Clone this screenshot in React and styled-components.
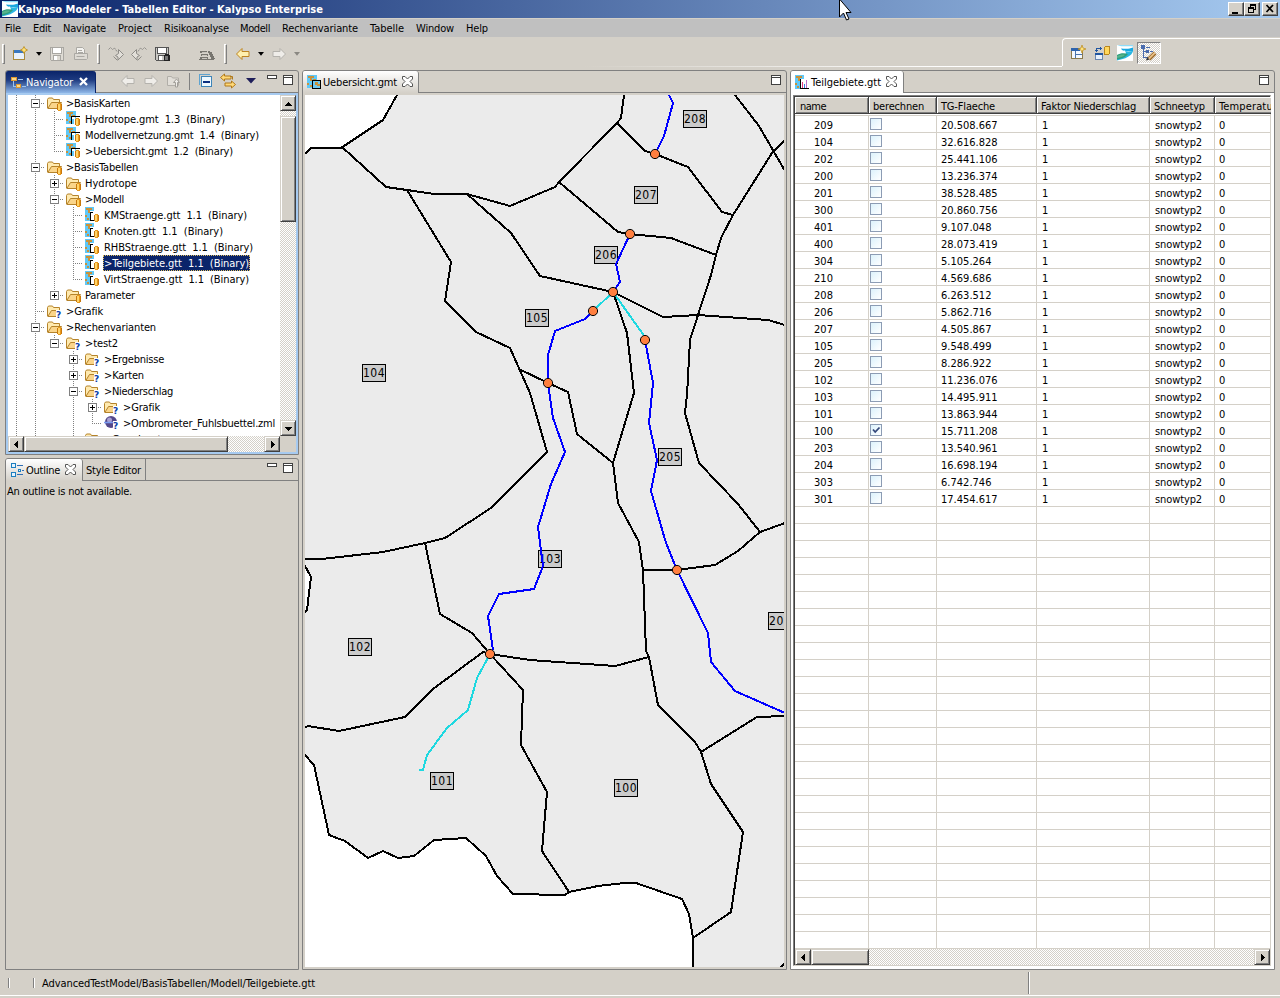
import React, { useLayoutEffect, useRef } from "react";
import styled, { createGlobalStyle, css } from "styled-components";

const C = {
  face: "#d4d0c8",
  shadow: "#808080",
  dark: "#404040",
  navy: "#0a246a",
  sky: "#a6caf0",
};

const GlobalStyle = createGlobalStyle`
  * { box-sizing: border-box; }
  html, body { margin: 0; padding: 0; overflow: hidden; }
  body {
    font-family: "DejaVu Sans Condensed", "DejaVu Sans", Tahoma, sans-serif;
    font-size: 11px;
    line-height: 16px;
    color: #000;
    background: ${C.face};
  }
  svg { display: block; flex: none; }
`;

/* ---------- text ---------- */

const TextSpan = styled.span`
  display: inline-block;
  white-space: pre;
  font-weight: ${(p) => (p.$bold ? 700 : 400)};
`;

// Spreads the letters so that the label takes the given width in pixels.
function Label({ w, bold, children }) {
  const ref = useRef(null);
  useLayoutEffect(() => {
    const el = ref.current;
    el.style.letterSpacing = "0px";
    const natural = el.getBoundingClientRect().width;
    el.style.letterSpacing = (w - natural) / String(children).length + "px";
  }, [w, children]);
  return (
    <TextSpan ref={ref} $bold={bold}>
      {children}
    </TextSpan>
  );
}

/* ---------- window frame ---------- */

const Window = styled.div`
  position: relative;
  display: flex;
  flex-direction: column;
  width: 1280px;
  height: 998px;
  overflow: hidden;
  background: ${C.face};
`;

const TitleBar = styled.div`
  display: flex;
  align-items: center;
  height: 18px;
  flex: none;
  padding: 0 2px 0 2px;
  gap: 0;
  color: #fff;
  background: linear-gradient(90deg, ${C.navy}, ${C.sky});
`;

const TitleText = styled.div`
  padding-top: 1px;
  line-height: 17px;
`;

const WindowButtons = styled.div`
  display: flex;
  margin-left: auto;
`;

const WindowButton = styled.div`
  width: 16px;
  height: 14px;
  margin-left: ${(p) => p.$gap || 0}px;
  background: ${C.face};
  border: 1px solid;
  border-color: #fff ${C.dark} ${C.dark} #fff;
  box-shadow: inset -1px -1px 0 ${C.shadow};
  display: flex;
  justify-content: center;
`;

const MenuBar = styled.div`
  display: flex;
  align-items: center;
  flex: none;
  height: 19px;
  padding: 1px 0 0 5px;
  border-top: 1px solid ${C.face};
  background: #c0c0c0;
`;

const MenuItem = styled.div`
  width: ${(p) => p.$w}px;
  flex: none;
`;

const ToolBar = styled.div`
  display: flex;
  height: 30px;
  flex: none;
`;

const ToolStrip = styled.div`
  display: flex;
  align-items: center;
  width: 1062px;
  padding-top: 4px;
  border-bottom: 1px solid;
  border-image: linear-gradient(90deg, ${C.face} 55%, #fff 90%) 1;
`;

const PerspectiveStrip = styled.div`
  display: flex;
  align-items: center;
  flex: 1;
  height: 28px;
  margin-top: 1px;
  padding-left: 3px;
  border: 1px solid #fff;
  border-width: 1px 0 0 1px;
  border-radius: 4px 0 0 0;
`;

const Slot = styled.div`
  width: ${(p) => p.$w}px;
  margin-left: ${(p) => p.$gap || 0}px;
  flex: none;
  display: flex;
  justify-content: center;
  align-items: center;
`;

const Handle = styled.div`
  width: 3px;
  height: 20px;
  margin: 0 ${(p) => p.$after}px 0 ${(p) => p.$before}px;
  border: 1px solid;
  border-color: #fff ${C.shadow} ${C.shadow} #fff;
  flex: none;
`;

const Pressed = styled.div`
  width: 24px;
  height: 22px;
  display: flex;
  align-items: center;
  justify-content: center;
  border: 1px solid;
  border-color: ${C.shadow} #fff #fff ${C.shadow};
  background: repeating-conic-gradient(#fff 0 25%, ${C.face} 0 50%) 0 0 / 2px 2px;
`;

/* ---------- panels ---------- */

const Workbench = styled.div`
  display: flex;
  flex: 1;
  min-height: 0;
  padding: 3px 4px 0 5px;
  gap: 3px;
`;

const LeftColumn = styled.div`
  display: flex;
  flex-direction: column;
  width: 294px;
  gap: 3px;
`;

const Panel = styled.section`
  display: flex;
  flex-direction: column;
  width: ${(p) => (p.$w ? p.$w + "px" : "auto")};
  height: ${(p) => (p.$h ? p.$h + "px" : "auto")};
  border: 1px solid ${C.shadow};
  border-radius: 3px 3px 0 0;
  background: ${C.face};
  overflow: hidden;
  flex: none;
`;

const TabStrip = styled.header`
  display: flex;
  height: 22px;
  flex: none;
  box-shadow: inset 0 -1px 0 ${C.shadow};
`;

const Tab = styled.div`
  display: flex;
  align-items: center;
  height: 100%;
  width: ${(p) => p.$w}px;
  padding: 1px 0 0 ${(p) => p.$pad ?? 4}px;
  flex: none;
  ${(p) =>
    p.$kind !== "plain" &&
    css`
      border-right: 1px solid ${C.shadow};
      background: linear-gradient(#fff, ${p.$kind === "white" ? "#fff" : C.face});
      border-radius: 0 3px 0 0;
    `}
  ${(p) =>
    p.$kind === "active" &&
    css`
      color: #fff;
      border-right-color: ${C.navy};
      background: linear-gradient(${C.navy}, #1d3a80 40%, #8fb7e8);
    `}
  ${(p) => p.$kind === "plain" && css`border-right: 1px solid ${C.shadow};`}
`;

const TabClose = styled.div`
  margin-left: 5px;
  padding-bottom: 3px;
`;

const PanelTools = styled.div`
  display: flex;
  margin-left: auto;
  padding: 0 ${(p) => p.$right || 5}px 2px 0;
`;

const MinMax = styled.div`
  display: flex;
  gap: 6px;
  padding-top: 4px;
`;

const MinGlyph = styled.div`
  width: 10px;
  height: 4px;
  border: 1px solid ${C.dark};
  background: #fff;
`;

const MaxGlyph = styled.div`
  width: 10px;
  height: 10px;
  border: 1px solid ${C.dark};
  box-shadow: inset 0 1px 0 #fff, inset 0 2px 0 ${C.dark};
  background: #fff;
`;

const Divider = styled.div`
  width: 1px;
  height: 17px;
  margin: 2px 4px 0 3px;
  background: ${C.shadow};
`;

/* ---------- scroll bars ---------- */

const ScrollButton = styled.div`
  width: 16px;
  height: 16px;
  flex: none;
  display: flex;
  align-items: center;
  justify-content: center;
  background: ${C.face};
  border: 1px solid;
  border-color: ${C.face} ${C.dark} ${C.dark} ${C.face};
  box-shadow: inset 1px 1px 0 #fff, inset -1px -1px 0 ${C.shadow};
`;

const ScrollTrack = styled.div`
  display: flex;
  flex-direction: ${(p) => (p.$vertical ? "column" : "row")};
  width: ${(p) => (p.$vertical ? "16px" : "auto")};
  height: ${(p) => (p.$vertical ? "auto" : "16px")};
  flex: ${(p) => (p.$fill ? 1 : "none")};
  background: repeating-conic-gradient(#fff 0 25%, ${C.face} 0 50%) 0 0 / 2px 2px;
`;

const ScrollThumb = styled(ScrollButton)`
  width: ${(p) => p.$w || 16}px;
  height: ${(p) => p.$h || 16}px;
  margin: ${(p) => p.$offset || 0}px 0 0 0;
`;

const Spacer = styled.div`
  flex: 1;
`;

const Arrow = ({ dir }) => {
  const d = {
    up: "M4 3h1v1h1v1h1v1h1v1h-7v-1h1v-1h1v-1h1z",
    down: "M1 3h7v1h-1v1h-1v1h-1v1h-1v-1h-1v-1h-1v-1h-1z",
    left: "M6 1v7h-1v-1h-1v-1h-1v-1h-1v-1h1v-1h1v-1h1v-1z",
    right: "M3 1v7h1v-1h1v-1h1v-1h1v-1h-1v-1h-1v-1h-1v-1z",
  }[dir];
  return (
    <svg width="9" height="9" shapeRendering="crispEdges">
      <path d={d} />
    </svg>
  );
};

/* ---------- icons ---------- */

const Wave = ({ w = 16, h = 16 }) => (
  <svg width={w} height={h} viewBox="0 0 16 16" preserveAspectRatio="none">
    <rect width="16" height="16" fill="#fff" />
    <path d="M0 0h16v1.500c-4-1-9 .5-13-.5z" fill="#8fdcf8" />
    <path d="M4 3.500c4 0 7 1 12-1v4c-4-1-8 .5-11-1.500z" fill="#19a7e0" />
    <path d="M8 6c3 1 5 0 8 0-1 5-8 8-16 9.500v-2c6-1 11-4 8-7.500z" fill="#2ab6e2" />
    <path d="M0 10c3-2 8-2 11-1-2 3-7 5-11 5.500z" fill="#2f9d7c" />
    <path d="M0 11c3-1 5-2 8-1-2 2-5 2.500-8 3z" fill="#58b48c" />
  </svg>
);

const Cylinder = ({ x, y }) => (
  <g transform={`translate(${x} ${y})`}>
    <rect x="0" y="1" width="5" height="6" fill="#c8780c" />
    <rect x="1" y="0" width="3" height="8" fill="#e8981c" />
    <rect x="1" y="1" width="2" height="6" fill="#ffd468" />
  </g>
);

const Question = ({ x, y }) => (
  <g>
    <rect x={x - 1} y={y - 8} width="6" height="9" fill="#fff" />
    <text x={x - 1} y={y} fontSize="9" fontWeight="700" fill="#0a3fa8" fontFamily="DejaVu Sans">
      ?
    </text>
  </g>
);

const FolderIcon = ({ mark }) => (
  <svg width="17" height="16" viewBox="0 0 17 16">
    <path d="M.5 13V4.500l1-1.500h4l1 1.500h6v3.500" fill="#ffeab0" stroke="#b5832a" />
    <path d="M.8 13.500l3.700-6h10l-3 6z" fill="#fad58a" stroke="#b5832a" />
    {mark === "db" ? <Cylinder x={10} y={8} /> : <Question x={10} y={15} />}
  </svg>
);

const MapIcon = ({ mark }) => (
  <svg width="16" height="16" shapeRendering="crispEdges">
    <rect width="10" height="13" fill="#5fc8f8" />
    <path d="M1 1h6v2h-2v3h-2v-3h-2zM0 8h2v2h-2zM6 4h3v2h-3zM3 10h2v2h-2z" fill="#c9923a" />
    {mark === "frame" ? (
      <g>
        <rect x="5.500" y="5.500" width="8" height="8" fill="#6fc8f0" stroke="#000" />
        <path d="M8 7h3v2h2v2h-3v-1h-2z" fill="#c9923a" />
      </g>
    ) : (
      <g>
        <path d="M5.500 13V5.500H14" fill="none" stroke="#000" />
        <rect x="6" y="6" width="3" height="7" fill="#fff" />
        <rect x="6" y="8" width="2" height="5" fill="#5fc8f8" />
        <Cylinder x={9} y={7} />
      </g>
    )}
  </svg>
);

const TableIcon = ({ chart }) => (
  <svg width="16" height="16" shapeRendering="crispEdges">
    <rect width="9" height="14" fill="#5fc8f8" />
    <path d="M1 1h6v2h-2v3h-2v-3h-2zM0 8h2v2h-2zM2 11h2v2h-2z" fill="#c9923a" />
    <rect x="5" y="4" width="10" height="10" fill="#fff" />
    <path d={chart ? "M5.500 4v9.500H14" : "M8 5.500H5.500v8H9"} fill="none" stroke="#000" />
    {chart ? (
      <g>
        <rect x="7" y="7" width="1" height="6" fill="#e33b7c" />
        <rect x="9" y="9" width="1" height="4" fill="#3a7fe0" />
        <rect x="11" y="5" width="1" height="8" fill="#b86fc8" />
      </g>
    ) : (
      <Cylinder x={9} y={7} />
    )}
  </svg>
);

const BallIcon = () => (
  <svg width="17" height="16">
    <circle cx="7" cy="7" r="6" fill="#54488a" />
    <circle cx="5.500" cy="5" r="2.500" fill="#a9a0d0" />
    <path d="M0 7.500h14" stroke="#7a9cf0" strokeWidth="1.500" />
    <Question x={10} y={14} />
  </svg>
);

const NewIcon = () => (
  <svg width="16" height="16">
    <rect x="1.500" y="4.500" width="11" height="9" fill="#e8f1fc" stroke="#a98a3c" />
    <rect x="2" y="4" width="10" height="3" fill="#3a78c0" />
    <path d="M12 .5l1.200 2.300 2.300 1.200-2.300 1.200L12 7.500l-1.200-2.300L8.500 4l2.300-1.200z" fill="#ffe27a" stroke="#b98a1c" strokeWidth=".8" />
  </svg>
);

const SaveIcon = ({ dark }) => {
  const s = dark ? "#555" : "#a9a7a2";
  return (
    <svg width="16" height="16" shapeRendering="crispEdges">
      <path d="M1.500 1.500h13v13h-12l-1-1z" fill={dark ? "#c9c8c4" : "#dedbd4"} stroke={s} />
      <rect x="4" y="2" width="8" height="5" fill="#fff" />
      <path d="M3.500 2v5.500h9V2M4.500 14v-4.500h7V14" fill="none" stroke={s} />
      <rect x="5" y="10" width="3" height="4" fill="#fff" />
      {dark && <path d="M10 9h1v-1h4v1h1v6h-6z" fill="#222" />}
      {dark && <rect x="11" y="10" width="3" height="4" fill="#777" />}
    </svg>
  );
};

const PrintIcon = () => (
  <svg width="16" height="16">
    <path d="M3.500 7.500v-6h6l2 2v4" fill="#f4f3f0" stroke="#aaa8a3" />
    <path d="M1.500 7.500h13v5l-1 1h-12z" fill="#dddad4" stroke="#aaa8a3" />
    <path d="M3.500 10.500h8M5 4.500h4M5 6.500h5" stroke="#aaa8a3" />
  </svg>
);

const SkipIcon = ({ flip }) => (
  <svg width="16" height="16">
    <g transform={flip ? "translate(16 0) scale(-1 1)" : undefined} fill="none" stroke="#8e8c88">
      <path d="M.5 3.500l2-2 2 2 2-1.500 2.500 3.500" strokeDasharray="2 .6" />
      <path d="M10.500 3.500l5 5-5.500 5.500v-3l-2.500-1.500 3-2z" fill="#e2dfd9" />
      <path d="M5.500 10.500l4 4" />
    </g>
  </svg>
);

const BooksIcon = () => (
  <svg width="16" height="16" shapeRendering="crispEdges">
    <path d="M1 5h7v2h-7zM2 8h7v2h-7zM1 11h8v2h-8z" fill="#77756f" />
    <path d="M9.500 5l4 8M12 6l3 7" stroke="#77756f" strokeWidth="1.500" />
    <path d="M3 6h5M3 9h5M3 12h5" stroke="#c8c5be" />
    <path d="M0 13.500h15" stroke="#77756f" />
  </svg>
);

const BigArrow = ({ right, off }) => (
  <svg width="16" height="16">
    <path
      transform={right ? "translate(16 0) scale(-1 1)" : undefined}
      d="M1.500 8l5.500-5.500v3h7v5H7v3z"
      fill={off ? "#efede9" : "#fff0ae"}
      stroke={off ? "#b4b2ad" : "#bd8420"}
      strokeLinejoin="round"
    />
  </svg>
);

const DropArrow = ({ off, big }) => (
  <svg width={big ? 10 : 6} height={big ? 6 : 4} viewBox="0 0 10 6" preserveAspectRatio="none">
    <path d="M0 0h10L5 5.500z" fill={big ? "#1e1e5a" : off ? "#8a8882" : "#000"} />
  </svg>
);

const UpFolderIcon = () => (
  <svg width="16" height="16">
    <path d="M1.500 12.500v-9h4l1 1.500h6v7.500z" fill="#e2dfd9" stroke="#b1aea8" />
    <path d="M9.500 14V9.500h-2l3-3.500 3 3.500h-2V14z" fill="#efede9" stroke="#a19e98" />
  </svg>
);

const CollapseIcon = () => (
  <svg width="16" height="16" shapeRendering="crispEdges">
    <path d="M1.500 12V1.500h10" fill="none" stroke="#5ea3d0" />
    <rect x="3.500" y="3.500" width="10" height="10" fill="#eef8ff" stroke="#3d84b8" />
    <rect x="5" y="8" width="7" height="2" fill="#0c2f80" />
  </svg>
);

const LinkIcon = () => (
  <svg width="16" height="16" stroke="#b0791a" fill="#ffd978" strokeLinejoin="round">
    <path d="M.5 4.500l4-3.500v2h6.500v3H4.500v2z" />
    <path d="M15.500 11.500l-4 3.500v-2H5v-3h6.500V8z" />
    <path d="M10 3.500h2.500v3" fill="none" />
  </svg>
);

const NavIcon = () => (
  <svg width="16" height="16" shapeRendering="crispEdges">
    <path d="M3.500 5v6.500h3" fill="none" stroke="#9cc4f0" />
    <rect x="1.500" y="2.500" width="5" height="3" fill="#fbd98c" stroke="#e09a30" />
    <rect x="6.500" y="9.500" width="4" height="3" fill="#fbd98c" stroke="#e09a30" />
    <path d="M8 4.500h5M12 11.500h4" stroke="#9cc4f0" />
  </svg>
);

const OutlineIcon = () => (
  <svg width="16" height="16" shapeRendering="crispEdges" fill="#e6f4ff" stroke="#1c7fc0">
    <rect x="1.500" y=".5" width="4" height="4" />
    <rect x="1.500" y="9.500" width="4" height="4" />
    <rect x="8.500" y="6.500" width="2" height="2" />
    <path d="M7 2.500h6M12 7.500h2M7 11.500h6" stroke="#2f6db4" />
  </svg>
);

const CloseIcon = ({ white }) =>
  white ? (
    <svg width="11" height="11">
      <path d="M2 2l7 7M9 2l-7 7" stroke="#fff" strokeWidth="2.300" />
    </svg>
  ) : (
    <svg width="11" height="11">
      <path
        d="M.5.500h2.500l2.500 2.500L8 .5h2.500v2.500L8 5.500l2.500 2.500v2.500H8L5.500 8 3 10.500H.5V8L3 5.500.5 3z"
        fill="#fff"
        stroke="#555"
      />
    </svg>
  );

const OpenPerspectiveIcon = () => (
  <svg width="16" height="16" shapeRendering="crispEdges">
    <rect x="1.500" y="3.500" width="11" height="10" fill="#f4f8fe" stroke="#8a7a4c" />
    <rect x="1" y="3" width="9" height="3" fill="#2f64ac" />
    <path d="M5.500 6v7M5 9.500h7" stroke="#4a74ac" />
    <path d="M12 0l1 3 3 1-3 1-1 3-1-3-3-1 3-1z" fill="#ffe27a" stroke="#b98a1c" strokeWidth=".7" shapeRendering="auto" />
  </svg>
);

const SyncIcon = () => (
  <svg width="16" height="16" shapeRendering="crispEdges">
    <rect x="1.500" y="8.500" width="7" height="6" fill="#e8f1fc" stroke="#6a86b0" />
    <rect x="1" y="8" width="8" height="2" fill="#1f55a0" />
    <path d="M2.500 7V3.500H8M1 5.500h3M6.500 2v3" fill="none" stroke="#1f55a0" />
    <rect x="10.500" y="1.500" width="5" height="8" rx="1.500" fill="#ffd75c" stroke="#b9861c" />
  </svg>
);

const TreeEditIcon = () => (
  <svg width="18" height="17">
    <g shapeRendering="crispEdges">
      <path d="M3.500 3v10.500M3 7.500h5M3 13.500h5" stroke="#4a6cae" fill="none" />
      <rect x="1" y="1" width="4" height="4" fill="#4a6cae" />
      <rect x="6" y="6" width="3" height="3" fill="#4a6cae" />
      <path d="M6 3.500h4M10 7.500h3" stroke="#4a6cae" />
    </g>
    <path d="M9 15l6-6" stroke="#9a6a2c" strokeWidth="4" />
    <path d="M9 14.600l6-6" stroke="#e8c088" strokeWidth="2" />
    <path d="M6 16.500l1-3.500 2.500 2.500z" fill="#333" />
  </svg>
);

/* ---------- navigator tree ---------- */

const FocusFrame = styled.div`
  display: flex;
  flex-direction: column;
  flex: 1;
  min-height: 0;
  padding: 0 2px 0;
  border-top: 2px solid ${C.sky};
  border-bottom: 2px solid ${C.sky};
  background: ${C.sky};
`;

const TreeBody = styled.div`
  display: flex;
  height: 341px;
  flex: none;
`;

const Tree = styled.div`
  flex: 1;
  min-width: 0;
  overflow: hidden;
  background: #fff;
`;

const TreeRow = styled.div`
  display: flex;
  height: 16px;
  white-space: nowrap;
`;

const dotsV = "repeating-linear-gradient(180deg, #808080 0 1px, transparent 1px 2px)";
const dotsH = "repeating-linear-gradient(90deg, #808080 0 1px, transparent 1px 2px)";

const Guide = styled.div`
  display: flex;
  align-items: center;
  justify-content: flex-end;
  width: 19px;
  height: 16px;
  flex: none;
  padding-right: 5px;
  background-repeat: no-repeat;
  &:first-child { width: 18px; }
  ${(p) => p.$type === "v" && css`background-image: ${dotsV}; background-size: 1px 16px; background-position: right 9px top 0;`}
  ${(p) =>
    "t+-".includes(p.$type) &&
    css`
      background-image: ${dotsV}, ${dotsH};
      background-size: 1px 16px, 10px 1px;
      background-position: right 9px top 0, right 0 top 8px;
    `}
  ${(p) =>
    "lpm".includes(p.$type) &&
    css`
      background-image: ${dotsV}, ${dotsH};
      background-size: 1px 8px, 10px 1px;
      background-position: right 9px top 0, right 0 top 8px;
    `}
`;

const ExpandBox = styled.div`
  width: 9px;
  height: 9px;
  margin-top: 1px;
  border: 1px solid ${C.shadow};
  background: linear-gradient(#000, #000) 1px 3px / 5px 1px no-repeat,
    ${(p) => (p.$plus ? "linear-gradient(#000, #000) 3px 1px / 1px 5px no-repeat," : "")} #fff;
`;

const TreeIcon = styled.div`
  margin: 0 1px 0 2px;
  width: 17px;
  flex: none;
`;

const TreeText = styled.div`
  height: 16px;
  padding: 1px 1px 0 1px;
  ${(p) =>
    p.$selected &&
    css`
      color: #fff;
      background: ${C.navy};
      outline: 1px dotted #e0c060;
      outline-offset: -1px;
    `}
`;

const treeRows = [
  ["v-", "db", ">BasisKarten", 64],
  ["vvt", "map", "Hydrotope.gmt  1.3  (Binary)", 140],
  ["vvt", "map", "Modellvernetzung.gmt  1.4  (Binary)", 174],
  ["vvl", "map", ">Uebersicht.gmt  1.2  (Binary)", 148],
  ["v-", "db", ">BasisTabellen", 72],
  ["vv+", "db", "Hydrotope", 52],
  ["vv-", "db", ">Modell", 39],
  ["vvvt", "table", "KMStraenge.gtt  1.1  (Binary)", 143],
  ["vvvt", "table", "Knoten.gtt  1.1  (Binary)", 119],
  ["vvvt", "table", "RHBStraenge.gtt  1.1  (Binary)", 149],
  ["vvvt", "table", ">Teilgebiete.gtt  1.1  (Binary)", 145, true],
  ["vvvl", "table", "VirtStraenge.gtt  1.1  (Binary)", 145],
  ["vvp", "db", "Parameter", 50],
  ["vt", "q", ">Grafik", 37],
  ["v-", "db", ">Rechenvarianten", 90],
  ["vvm", "q", ">test2", 33],
  ["vv +", "q", ">Ergebnisse", 60],
  ["vv +", "q", ">Karten", 40],
  ["vv -", "q", ">Niederschlag", 69],
  ["vv v+", "q", ">Grafik", 37],
  ["vv vl", "ball", ">Ombrometer_Fuhlsbuettel.zml", 152],
  ["vv t", "q", ">Grundwert", 57],
];

const rowIcon = {
  db: <FolderIcon mark="db" />,
  q: <FolderIcon mark="q" />,
  map: <MapIcon />,
  table: <TableIcon />,
  ball: <BallIcon />,
};

function NavigatorTree() {
  return (
    <Tree>
      {treeRows.map(([guides, icon, text, w, selected], i) => (
        <TreeRow key={i}>
          {guides.split("").map((g, k) => (
            <Guide key={k} $type={g}>
              {"+-pm".includes(g) && <ExpandBox $plus={g === "+" || g === "p"} />}
            </Guide>
          ))}
          <TreeIcon>{rowIcon[icon]}</TreeIcon>
          <TreeText $selected={selected}>
            <Label w={w}>{text}</Label>
          </TreeText>
        </TreeRow>
      ))}
    </Tree>
  );
}

const Corner = styled.div`
  width: 16px;
  background: ${C.face};
`;

const BottomScroll = styled.div`
  display: flex;
  height: 16px;
  flex: none;
`;

const OutlineBody = styled.div`
  padding: 3px 0 0 1px;
`;

/* ---------- map ---------- */

const MapArea = styled.div`
  width: 479px;
  height: 872px;
  margin: 2px 0 0 2px;
  overflow: hidden;
  background: #ebebeb;
`;

const boundaries = [
  "305,154 311,148 341,148 383,120 397,95",
  "342,147 386,187 407,190 434,194 467,194 510,206 555,187 559,182 617,123 621,118 624,95",
  "617,123 645,151 655,154 688,167 722,212 733,215",
  "559,182 618,232 630,234 671,238 716,255",
  "735,95 759,126 785,171",
  "785,140 772,153 733,215 721,238 716,255 711,275 698,315 690,340 687,395 685,413 699,463 738,504 760,532 785,523",
  "760,532 738,551 715,565 677,570 643,570",
  "467,194 511,233 540,276 613,292 663,317 698,315 768,320 785,325",
  "407,190 451,262 445,301 476,332 510,348 530,393 547,452 491,508 445,538 425,543 383,552 322,559 305,559",
  "519,369 548,383 568,392 577,434 613,463 618,503 639,542 643,570 646,651 649,657 658,705 695,742 701,752 711,784 743,832 731,912 693,938",
  "613,292 627,333 634,393 613,463",
  "425,543 440,614 472,633 490,654 523,690 521,745 547,792 542,851 569,892",
  "490,654 483,652 433,689 405,717 339,731 308,726 304,728",
  "490,654 530,660 615,666 649,657",
  "304,564 311,577 307,610 304,613",
  "304,754 314,765 329,835 345,841 368,858 383,851 398,858 414,856 434,840 466,838 486,856 497,876 513,894 565,895 569,892 598,886 625,883 636,883 682,899 689,914 693,938 693,968",
  "701,752 757,717 785,716",
  "780,968 785,963",
];

const rivers = [
  "669,95 673,103 664,136 655,154",
  "630,234 616,264 620,282 613,292",
  "593,311 585,319 555,331 548,355 548,383 553,418 565,452 551,484 538,527 543,566 534,589 499,594 488,616 493,650",
  "645,340 653,383 649,423 657,460 651,491 666,543 677,570 708,633 711,662 735,691 785,713",
];

const drains = [
  "613,292 593,311",
  "613,292 645,337",
  "490,654 477,678 468,710 447,728 427,755 423,770 419,770",
];

const nodes = [
  [655, 154], [630, 234], [613, 292], [593, 311], [645, 340], [548, 383], [677, 570], [490, 654],
];

const regions = [
  [683, 110, "208"], [634, 186, "207"], [594, 246, "206"], [525, 309, "105"], [362, 364, "104"],
  [538, 550, "103"], [348, 638, "102"], [430, 772, "101"], [614, 779, "100"], [658, 448, "205"],
  [768, 612, "20"],
];

const Lines = ({ list, color }) =>
  list.map((points) => (
    <polyline key={points} points={points} fill="none" stroke={color} strokeWidth="2" shapeRendering="crispEdges" />
  ));

const CatchmentMap = () => (
  <svg width="479" height="872" viewBox="305 95 479 872">
    <g fill="#fff">
      <polygon points="305,95 397,95 383,120 341,148 311,148 305,154" />
      <polygon points="305,565 311,577 307,610 305,613" />
      <polygon points="305,755 314,765 329,835 345,841 368,858 383,851 398,858 414,856 434,840 466,838 486,856 497,876 513,894 565,895 598,886 625,883 636,883 682,899 689,914 693,938 693,967 305,967" />
    </g>
    <Lines list={boundaries} color="#000" />
    {regions.map(([x, y, name]) => (
      <g key={name}>
        <rect x={x + 0.5} y={y + 0.5} width="23" height="17" fill="#cbcbcb" stroke="#000" />
        <text x={x + 1} y={y + 13} fontSize="12" textLength={name.length * 7.2} fill="#000">
          {name}
        </text>
      </g>
    ))}
    <Lines list={rivers} color="#0000ff" />
    <Lines list={drains} color="#1ed8e0" />
    {nodes.map(([x, y]) => (
      <circle key={x} cx={x} cy={y} r="4.600" fill="#ff7f3f" stroke="#000" />
    ))}
  </svg>
);

/* ---------- table ---------- */

const TableFrame = styled.div`
  display: flex;
  flex-direction: column;
  flex: 1;
  padding: 2px 3px 3px 2px;
  background: #fff;
`;

const Table = styled.div`
  flex: 1;
  border: 1px solid;
  border-color: ${C.shadow} ${C.face} ${C.face} ${C.shadow};
  box-shadow: inset 1px 1px 0 ${C.dark};
  padding: 1px 0 0 1px;
`;

const columns = "74px 68px 100px 113px 65px 56px";

const HeadRow = styled.div`
  display: grid;
  grid-template-columns: ${columns};
  height: 17px;
`;

const HeadCell = styled.div`
  padding: 1px 0 0 4px;
  line-height: 17px;
  overflow: hidden;
  background: ${C.face};
  box-shadow: inset -1px -1px 0 ${C.dark}, inset 1px 1px 0 #fff, inset -2px -2px 0 ${C.shadow};
  &:first-child { padding-left: 5px; }
  &:last-child {
    box-shadow: inset 0 -1px 0 ${C.dark}, inset 1px 1px 0 #fff, inset 0 -2px 0 ${C.shadow};
  }
`;

const HeadGap = styled.div`
  height: 2px;
  border-bottom: 1px solid ${C.face};
`;

const Row = styled.div`
  display: grid;
  grid-template-columns: ${columns};
  height: 17px;
`;

const Cell = styled.div`
  padding: 1px 0 0 ${(p) => p.$pad}px;
  border: 1px solid ${C.face};
  border-width: 0 1px 1px 0;
  line-height: 17px;
  height: 17px;
`;

const CheckBox = styled.div`
  display: flex;
  width: 12px;
  height: 12px;
  margin-top: 1px;
  border: 1px solid #8c9cb4;
  background: linear-gradient(135deg, #dcf2fc, #fff);
`;

const heads = [
  ["name", 26], ["berechnen", 51], ["TG-Flaeche", 54], ["Faktor Niederschlag", 95], ["Schneetyp", 51], ["Temperatur", 58],
];

const data = [
  ["209", "20.508.667"], ["104", "32.616.828"], ["202", "25.441.106"], ["200", "13.236.374"],
  ["201", "38.528.485"], ["300", "20.860.756"], ["401", "9.107.048"], ["400", "28.073.419"],
  ["304", "5.105.264"], ["210", "4.569.686"], ["208", "6.263.512"], ["206", "5.862.716"],
  ["207", "4.505.867"], ["105", "9.548.499"], ["205", "8.286.922"], ["102", "11.236.076"],
  ["103", "14.495.911"], ["101", "13.863.944"], ["100", "15.711.208", true], ["203", "13.540.961"],
  ["204", "16.698.194"], ["303", "6.742.746"], ["301", "17.454.617"],
];

const numberWidth = (s) => s.split("").reduce((sum, c) => sum + (c === "." ? 4 : 6), 0);

function DataTable() {
  const rows = Array.from({ length: 49 }, (_, i) => data[i]);
  return (
    <Table>
      <HeadRow>
        {heads.map(([text, w]) => (
          <HeadCell key={text}>
            <Label w={w}>{text}</Label>
          </HeadCell>
        ))}
      </HeadRow>
      <HeadGap />
      {rows.map((r, i) => (
        <Row key={i}>
          <Cell $pad={19}>{r && <Label w={19}>{r[0]}</Label>}</Cell>
          <Cell $pad={1}>
            {r && (
              <CheckBox>
                {r[2] && (
                  <svg width="10" height="10">
                    <path d="M2 4.500l2.200 2.500L8.500 2.500" fill="none" stroke="#34487a" strokeWidth="1.800" />
                  </svg>
                )}
              </CheckBox>
            )}
          </Cell>
          <Cell $pad={4}>{r && <Label w={numberWidth(r[1]) + 0.5}>{r[1]}</Label>}</Cell>
          <Cell $pad={5}>{r && "1"}</Cell>
          <Cell $pad={5}>{r && <Label w={47}>snowtyp2</Label>}</Cell>
          <Cell $pad={4}>{r && "0"}</Cell>
        </Row>
      ))}
      <ScrollTrack>
        <ScrollButton>
          <Arrow dir="left" />
        </ScrollButton>
        <ScrollThumb $w={58} />
        <Spacer />
        <ScrollButton>
          <Arrow dir="right" />
        </ScrollButton>
      </ScrollTrack>
    </Table>
  );
}

/* ---------- status bar ---------- */

const StatusBar = styled.footer`
  display: flex;
  align-items: center;
  height: 28px;
  flex: none;
  padding: 0 0 2px 8px;
  box-shadow: inset 0 -2px 0 ${C.face}, inset 0 -3px 0 #fff;
`;

const StatusRule = styled.div`
  width: 2px;
  height: ${(p) => p.$h}px;
  margin-right: ${(p) => p.$after || 0}px;
  border: solid;
  border-width: 0 1px;
  border-color: ${C.shadow} #fff transparent ${C.shadow};
`;

const StatusText = styled.div`
  width: 986px;
  padding-top: 1px;
`;

const Pointer = styled.svg`
  position: absolute;
  left: 839px;
  top: 0;
`;

const menus = [
  ["File", 16, 28], ["Edit", 18, 30], ["Navigate", 43, 55], ["Project", 34, 46], ["Risikoanalyse", 65, 76],
  ["Modell", 30, 42], ["Rechenvariante", 76, 88], ["Tabelle", 34, 46], ["Window", 38, 50], ["Help", 22, 30],
];

export default function App() {
  return (
    <>
      <GlobalStyle />
      <Window>
        <TitleBar>
          <Wave />
          <TitleText>
            <Label w={305} bold>
              Kalypso Modeler - Tabellen Editor - Kalypso Enterprise
            </Label>
          </TitleText>
          <WindowButtons>
            <WindowButton>
              <svg width="14" height="12" shapeRendering="crispEdges">
                <rect x="3" y="9" width="6" height="2" />
              </svg>
            </WindowButton>
            <WindowButton>
              <svg width="14" height="12" shapeRendering="crispEdges">
                <path d="M5.500 5V2.500h5v4H9M5 2h6M3.500 5.500h5v4h-5zM3 5h6" fill="none" stroke="#000" />
                <path d="M5 1h6v2H5zM3 4h6v2H3z" />
              </svg>
            </WindowButton>
            <WindowButton $gap={2}>
              <svg width="14" height="12">
                <path d="M3.500 2l6.500 7M10 2L3.500 9" stroke="#000" strokeWidth="1.700" />
              </svg>
            </WindowButton>
          </WindowButtons>
        </TitleBar>
        <MenuBar>
          {menus.map(([text, w, slot]) => (
            <MenuItem key={text} $w={slot}>
              <Label w={w}>{text}</Label>
            </MenuItem>
          ))}
        </MenuBar>
        <ToolBar>
          <ToolStrip>
            <Handle $before={2} $after={3} />
            <Slot $w={24}><NewIcon /></Slot>
            <Slot $w={13}><DropArrow /></Slot>
            <Slot $w={24}><SaveIcon /></Slot>
            <Slot $w={23}><PrintIcon /></Slot>
            <Handle $before={5} $after={4} />
            <Slot $w={23}><SkipIcon /></Slot>
            <Slot $w={23}><SkipIcon flip /></Slot>
            <Slot $w={23}><SaveIcon dark /></Slot>
            <Slot $w={23} $gap={22}><BooksIcon /></Slot>
            <Handle $before={6} $after={5} />
            <Slot $w={22}><BigArrow /></Slot>
            <Slot $w={14}><DropArrow /></Slot>
            <Slot $w={22}><BigArrow right off /></Slot>
            <Slot $w={14}><DropArrow off /></Slot>
          </ToolStrip>
          <PerspectiveStrip>
            <Slot $w={24}><OpenPerspectiveIcon /></Slot>
            <Slot $w={23}><SyncIcon /></Slot>
            <Slot $w={24}><Wave /></Slot>
            <Pressed><TreeEditIcon /></Pressed>
          </PerspectiveStrip>
        </ToolBar>

        <Workbench>
          <LeftColumn>
            <Panel $h={385}>
              <TabStrip>
                <Tab $w={90} $kind="active">
                  <NavIcon />
                  <Label w={47}>Navigator</Label>
                  <TabClose><CloseIcon white /></TabClose>
                </Tab>
                <PanelTools>
                  <Slot $w={23}><BigArrow off /></Slot>
                  <Slot $w={23}><BigArrow right off /></Slot>
                  <Slot $w={24}><UpFolderIcon /></Slot>
                  <Divider />
                  <Slot $w={23}><CollapseIcon /></Slot>
                  <Slot $w={22}><LinkIcon /></Slot>
                  <Slot $w={23}><DropArrow big /></Slot>
                  <Slot $w={5} />
                  <MinMax>
                    <MinGlyph />
                    <MaxGlyph />
                  </MinMax>
                </PanelTools>
              </TabStrip>
              <FocusFrame>
                <TreeBody>
                  <NavigatorTree />
                  <ScrollTrack $vertical>
                    <ScrollButton><Arrow dir="up" /></ScrollButton>
                    <ScrollThumb $h={106} $offset={5} />
                    <Spacer />
                    <ScrollButton><Arrow dir="down" /></ScrollButton>
                  </ScrollTrack>
                </TreeBody>
                <BottomScroll>
                  <ScrollTrack $fill>
                    <ScrollButton><Arrow dir="left" /></ScrollButton>
                    <ScrollThumb $w={204} />
                    <Spacer />
                    <ScrollButton><Arrow dir="right" /></ScrollButton>
                  </ScrollTrack>
                  <Corner />
                </BottomScroll>
              </FocusFrame>
            </Panel>

            <Panel $h={512}>
              <TabStrip>
                <Tab $w={77}>
                  <OutlineIcon />
                  <Label w={34}>Outline</Label>
                  <TabClose><CloseIcon /></TabClose>
                </Tab>
                <Tab $w={63} $pad={3} $kind="plain">
                  <Label w={55}>Style Editor</Label>
                </Tab>
                <PanelTools>
                  <MinMax>
                    <MinGlyph />
                    <MaxGlyph />
                  </MinMax>
                </PanelTools>
              </TabStrip>
              <OutlineBody>
                <Label w={125}>An outline is not available.</Label>
              </OutlineBody>
            </Panel>
          </LeftColumn>

          <Panel $w={485} $h={900}>
            <TabStrip>
              <Tab $w={116}>
                <MapIcon mark="frame" />
                <Label w={74}>Uebersicht.gmt</Label>
                <TabClose><CloseIcon /></TabClose>
              </Tab>
              <PanelTools>
                <MinMax><MaxGlyph /></MinMax>
              </PanelTools>
            </TabStrip>
            <MapArea>
              <CatchmentMap />
            </MapArea>
          </Panel>

          <Panel $w={485} $h={900}>
            <TabStrip>
              <Tab $w={113} $kind="white">
                <TableIcon chart />
                <Label w={70}>Teilgebiete.gtt</Label>
                <TabClose><CloseIcon /></TabClose>
              </Tab>
              <PanelTools>
                <MinMax><MaxGlyph /></MinMax>
              </PanelTools>
            </TabStrip>
            <TableFrame>
              <DataTable />
            </TableFrame>
          </Panel>
        </Workbench>

        <StatusBar>
          <StatusRule $h={10} $after={23} />
          <StatusRule $h={10} $after={7} />
          <StatusText>
            <Label w={273}>AdvancedTestModel/BasisTabellen/Modell/Teilgebiete.gtt</Label>
          </StatusText>
          <StatusRule $h={22} />
        </StatusBar>

        <Pointer width="13" height="22" viewBox="0 0 13 22">
          <path d="M.5-1v18l4-4 3 7 2.500-1-3-6.500h5z" fill="#fff" stroke="#000" />
        </Pointer>
      </Window>
    </>
  );
}
